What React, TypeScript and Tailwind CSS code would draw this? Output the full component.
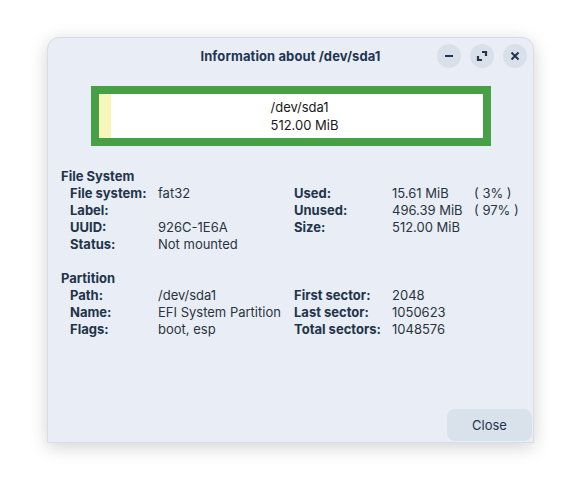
import React from "react";

const Label = ({ children }: { children: React.ReactNode }) => (
  <div className="font-bold text-[#22344a]">{children}</div>
);
const Val = ({ children }: { children?: React.ReactNode }) => (
  <div className="text-[#2a3441] h-[17px]">{children}</div>
);

export default function App() {
  return (
    <div className="w-[581px] h-[500px] bg-white relative" style={{ fontFamily: "Inter, 'Noto Sans', sans-serif" }}>
      <div className="absolute left-[47px] top-[37px] w-[487px] h-[406px] bg-[#e9eef6] rounded-t-[12px] shadow-[0_4px_18px_rgba(0,0,0,0.18)] border border-[#d8dde3] flex flex-col text-[13px] leading-[17px]">
        <div className="h-[36px] relative flex items-center justify-center">
          <div className="font-bold text-[#1f3552] tracking-[0.1px]">Information about /dev/sda1</div>
          <div className="absolute right-[6px] top-[6px] flex gap-[9px]">
            <div className="w-[24px] h-[24px] rounded-full bg-[#d9e0e9] flex items-center justify-center">
              <svg width="10" height="10" viewBox="0 0 10 10"><path d="M1 5h8" stroke="#1f3552" strokeWidth="2" /></svg>
            </div>
            <div className="w-[24px] h-[24px] rounded-full bg-[#d9e0e9] flex items-center justify-center">
              <svg width="12" height="12" viewBox="0 0 12 12" fill="none" stroke="#1f3552" strokeWidth="2.2"><path d="M6 2h4v4M2 6v4h4" /></svg>
            </div>
            <div className="w-[24px] h-[24px] rounded-full bg-[#d9e0e9] flex items-center justify-center">
              <svg width="10" height="10" viewBox="0 0 10 10"><path d="M1.5 1.5l7 7M8.5 1.5l-7 7" stroke="#1f3552" strokeWidth="2" /></svg>
            </div>
          </div>
        </div>
        <div className="flex justify-center mt-[12px]">
          <div className="w-[400px] h-[60px] bg-[#47a046] p-[8px]">
            <div className="w-full h-full bg-white flex">
              <div className="w-[12px] bg-[#f7f7b7]" />
              <div className="flex-1 flex flex-col items-start justify-center text-[#1a1a1a] leading-[18px] pl-[160px]">
                <div>/dev/sda1</div>
                <div>512.00 MiB</div>
              </div>
            </div>
          </div>
        </div>
        <div className="pl-[13px] mt-[22px]">
          <div className="font-bold text-[#22344a]">File System</div>
          <div className="flex items-start pl-[9px]">
            <div className="grid grid-cols-[88px_136px] w-[224px]">
              <Label>File system:</Label><Val>fat32</Val>
              <Label>Label:</Label><Val></Val>
              <Label>UUID:</Label><Val>926C-1E6A</Val>
              <Label>Status:</Label><Val>Not mounted</Val>
            </div>
            <div className="grid grid-cols-[98px_82px_60px]">
              <Label>Used:</Label><Val>15.61 MiB</Val><Val>( 3% )</Val>
              <Label>Unused:</Label><Val>496.39 MiB</Val><Val>( 97% )</Val>
              <Label>Size:</Label><Val>512.00 MiB</Val><Val></Val>
            </div>
          </div>
          <div className="font-bold text-[#22344a] mt-[17px]">Partition</div>
          <div className="flex items-start pl-[9px]">
            <div className="grid grid-cols-[88px_136px] w-[224px]">
              <Label>Path:</Label><Val>/dev/sda1</Val>
              <Label>Name:</Label><Val>EFI System Partition</Val>
              <Label>Flags:</Label><Val>boot, esp</Val>
            </div>
            <div className="grid grid-cols-[98px_100px]">
              <Label>First sector:</Label><Val>2048</Val>
              <Label>Last sector:</Label><Val>1050623</Val>
              <Label>Total sectors:</Label><Val>1048576</Val>
            </div>
          </div>
        </div>
        <div className="flex-1" />
        <div className="flex justify-end pr-[1px] pb-[1px]">
          <div className="w-[85px] h-[32px] rounded-[8px] bg-[#d9e1ea] flex items-center justify-center text-[#1f3552]">Close</div>
        </div>
      </div>
    </div>
  );
}
